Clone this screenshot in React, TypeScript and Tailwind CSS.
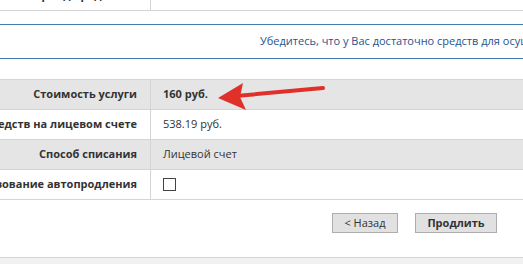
import React from 'react'

const rows = [
  { label: 'Стоимость услуги', value: '160 руб.', bold: true, shade: true },
  { label: 'Средств на лицевом счете', value: '538.19 руб.', shade: false },
  { label: 'Способ списания', value: 'Лицевой счет', shade: true },
  { label: 'Использование автопродления', value: null, shade: false },
]

export default function App() {
  return (
    <div className="relative w-[523px] h-[264px] overflow-hidden bg-white text-[11px] text-[#333] font-['Open_Sans',sans-serif]">
      {/* cut-off row above */}
      <div className="flex h-[11px] border-b border-[#d4d4d4] overflow-hidden">
        <div className="w-[151px] border-r border-[#d4d4d4] pr-[13px] text-right font-bold leading-[14px] -mt-[12px] whitespace-nowrap">
          Период продления
        </div>
        <div className="flex-1" />
      </div>

      {/* notice */}
      <div className="mt-[13px] h-[35px] border-y border-[#3f7db3] flex items-center pl-[260px] whitespace-nowrap text-[#27528f]">
        Убедитесь, что у Вас достаточно средств для осуществления операции
      </div>

      {/* details table */}
      <div className="mt-[20px] border-t border-[#d4d4d4]">
        {rows.map((r) => (
          <div
            key={r.label}
            className={`flex h-[30px] border-b border-[#d4d4d4] ${r.shade ? 'bg-[#e5e5e5]' : 'bg-white'}`}
          >
            <div className="w-[151px] shrink-0 border-r border-[#d4d4d4] pr-[13px] flex items-center justify-end font-bold whitespace-nowrap">
              {r.label}
            </div>
            <div className={`flex-1 pl-[12px] flex items-center ${r.bold ? 'font-bold' : ''}`}>
              {r.value ?? <span className="block w-[13px] h-[13px] border border-[#444] bg-white" />}
            </div>
          </div>
        ))}
      </div>

      {/* buttons */}
      <div className="flex justify-end gap-[17px] pr-[26px] mt-[13px]">
        <button className="w-[66px] h-[20px] bg-[#e1e1e1] border border-[#adadad] text-[11px] text-[#333]">
          &lt; Назад
        </button>
        <button className="w-[82px] h-[20px] bg-[#e1e1e1] border border-[#adadad] text-[11px] font-bold text-[#333]">
          Продлить
        </button>
      </div>

      <div className="absolute left-0 right-0 top-[257px] bottom-0 border-t border-[#d4d4d4] bg-[#f1f1f1]" />

      {/* red arrow */}
      <svg className="absolute left-0 top-0" width="523" height="264">
        <line x1="323" y1="88" x2="236" y2="96" stroke="#e0302a" strokeWidth="4" strokeLinecap="round" />
        <polygon points="218,98 243,83 240,97 246,110" fill="#e0302a" />
      </svg>
    </div>
  )
}
